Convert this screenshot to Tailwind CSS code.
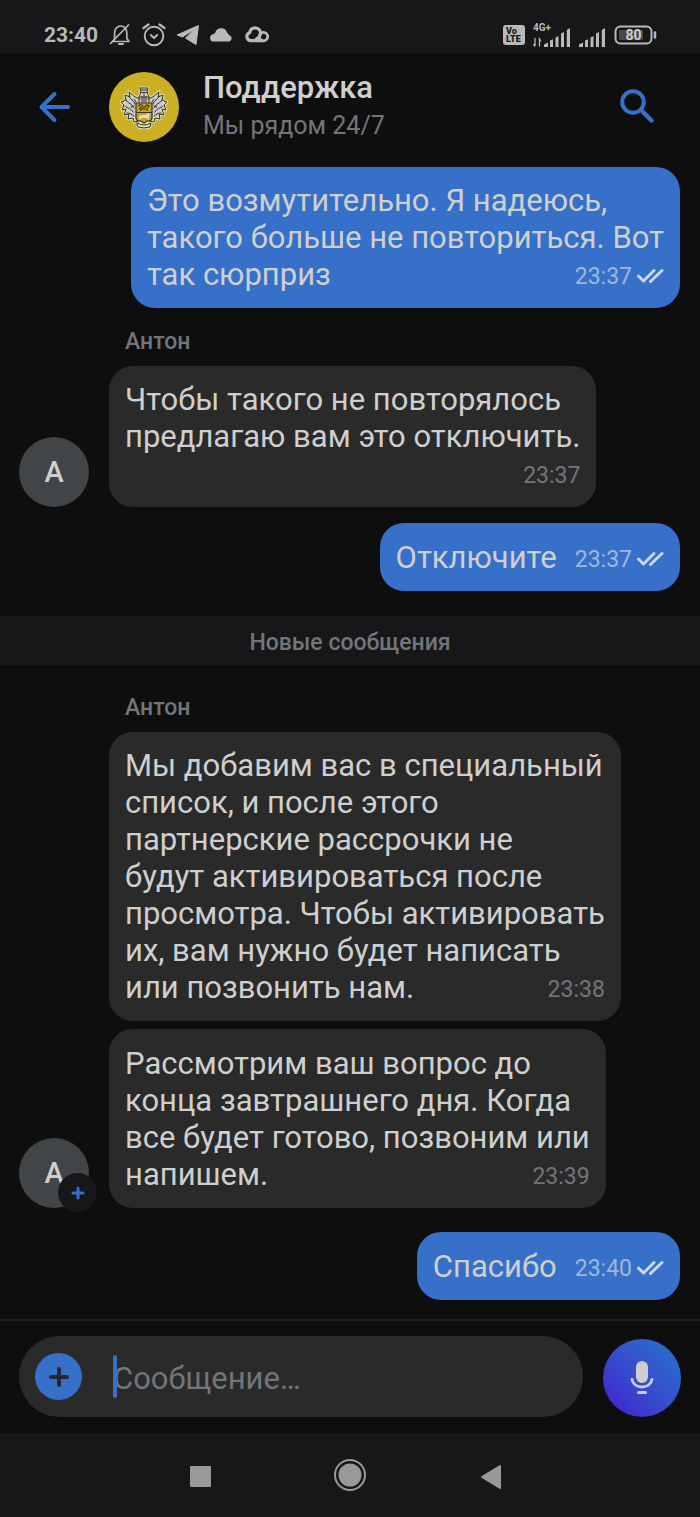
<!DOCTYPE html>
<html lang="ru">
<head>
  <meta charset="UTF-8" />
  <meta name="viewport" content="width=device-width, initial-scale=1" />
  <title>Поддержка</title>
  <script src="https://cdn.jsdelivr.net/npm/@tailwindcss/browser@4"></script>
</head>
<body class="flex min-h-screen flex-col bg-[#0e0e0e] font-[Roboto,sans-serif] text-[#cfcfcf]">

  <!-- Status bar -->
  <div class="flex h-[53px] items-center justify-between bg-[#17171a] pt-4 pr-[43px] pl-11 text-[#b9b9b9]">
    <div class="flex items-center gap-[10px]">
      <span class="text-[21px] leading-7 font-bold">23:40</span>
      <svg class="h-6 w-6" viewBox="0 0 24 24" fill="none" stroke="currentColor" stroke-width="1.7" stroke-linecap="round" stroke-linejoin="round">
        <path d="M5.500 18.500H21l-2.200-3.200V9.800C18.800 6 16.600 3 12.800 3S6.600 6 6.600 9.800v5.500z" />
        <path d="M20.500 2 2.500 20.500" />
        <path d="M11 21h4" stroke-width="2.200" />
      </svg>
      <svg class="h-6 w-6" viewBox="0 0 24 24" fill="none" stroke="currentColor" stroke-width="1.9" stroke-linecap="round" stroke-linejoin="round">
        <circle cx="12" cy="13" r="9.300" />
        <path d="m8.800 12 3.200 3 3.200-3" />
        <path d="M1.500 5 6.500 1.500M22.500 5l-5-3.500" stroke-width="2.200" />
      </svg>
      <svg class="h-6 w-6" viewBox="0 0 24 24" fill="currentColor" stroke="currentColor" stroke-linejoin="round">
        <path d="M22.500 2.500 1 12l5.500 2L18 6.500l-8.500 8.700L20 21.500z" />
      </svg>
      <svg class="h-6 w-6" viewBox="0 0 24 24" fill="currentColor">
        <path d="M4 18.500a3.600 3.600 0 0 1-.500-7.200A4 4 0 0 1 5.200 9.800 6.200 6.200 0 0 1 17 9.500a4 4 0 0 1 1.800 2.500 3.400 3.400 0 0 1 .700 6.500z" />
      </svg>
      <svg class="h-6 w-[26px]" viewBox="0 0 26 24" fill="none" stroke="currentColor" stroke-width="3.200" stroke-linejoin="round">
        <path d="M19 17.600H6.500a4 4 0 0 1-.800-7.800C6 6.500 8.500 4.800 11 4.800c3.800 0 6 3 5.400 6.500-.400 2-2.400 4-5.400 6" />
        <circle cx="19.500" cy="13.600" r="4.200" stroke-width="2.800" />
      </svg>
    </div>
    <div class="flex items-center gap-2">
      <svg class="h-5 w-[22px]" viewBox="0 0 22 20">
        <rect width="22" height="20" rx="3" fill="#b9b9b9" />
        <g fill="#17171a" font-family="Roboto, sans-serif" font-weight="900" font-size="9">
          <text x="3" y="9">Vo</text>
          <text x="3" y="17">LTE</text>
        </g>
      </svg>
      <svg class="h-[26px] w-[38px]" viewBox="0 -4 38 26" fill="currentColor">
        <text x="0" y="5" font-family="Roboto, sans-serif" font-weight="700" font-size="10">4G+</text>
        <path d="M2 12v8M.500 18 2 20.500M6.500 20.500V13l1.500 2" fill="none" stroke="currentColor" stroke-width="1.300" />
        <path d="M11 18.500l4-2V21h-4zM17 14.500l3-1.200V21h-3zM22.500 11.500l3-1.500v11h-3zM28 7.500 31 6v15h-3zM33.800 4l3.200-2V21h-3.200z" />
      </svg>
      <svg class="h-[26px] w-[27px]" viewBox="11 -4 27 26" fill="currentColor">
        <path d="M11 18.500l4-2V21h-4zM17 14.500l3-1.200V21h-3zM22.500 11.500l3-1.500v11h-3zM28 7.500 31 6v15h-3zM33.800 4l3.200-2V21h-3.200z" />
      </svg>
      <svg class="h-5 w-[43px]" viewBox="0 0 43 20">
        <rect x="1.500" y="1.500" width="36" height="17" rx="5" fill="none" stroke="#b9b9b9" stroke-width="2" />
        <rect x="5" y="5" width="24" height="10" rx="1" fill="#48484a" />
        <path d="M41 7.500v5" stroke="#b9b9b9" stroke-width="2.500" stroke-linecap="round" />
        <text x="19.500" y="15" text-anchor="middle" fill="#cfcfcf" font-family="Roboto, sans-serif" font-weight="700" font-size="14">80</text>
      </svg>
    </div>
  </div>

  <!-- Chat header -->
  <header class="flex h-[108px] items-center pr-11 pl-[37px]">
    <button type="button" aria-label="Назад" class="mr-9 text-[#3670c9]">
      <svg class="h-9 w-9" viewBox="0 0 36 36" fill="none" stroke="currentColor" stroke-width="4" stroke-linecap="round" stroke-linejoin="round">
        <path d="M31 18H5M17.500 5 4.500 18l13 13" />
      </svg>
    </button>
    <svg class="h-[70px] w-[70px]" viewBox="0 0 70 70" aria-hidden="true">
      <circle cx="35" cy="35" r="35" fill="#ccb023" />
      <!-- mantling -->
      <g stroke-linejoin="round" stroke-linecap="round">
        <g fill="#c9c9c9" stroke="#e3dba8" stroke-width="3">
          <path d="M31 27 26 25l-6-5 1 5-5-2 1 5-5 2 3 3-2 5 4-1-2 6 5-1-1 5 5-1 1 4 5-1 5 5 5-5 5 1 1-4 5 1-1-5 5 1-2-6 4 1-2-5 3-3-5-2 1-5-5 2 1-5-6 5-5 2z" />
          <path d="M31 16h8l-1 4 2 5v6H30v-6l2-5zM28 51q7 4 14 0l-1 4q-6 2-12 0z" />
        </g>
        <g fill="none" stroke="#33332f" stroke-width="1">
          <path d="M31 27 26 25l-6-5 1 5-5-2 1 5-5 2 3 3-2 5 4-1-2 6 5-1-1 5 5-1 1 4 5-1M39 27l5-2 6-5-1 5 5-2-1 5 5 2-3 3 2 5-4-1 2 6-5-1 1 5-5-1-1 4-5-1" />
          <path d="M20 24c1 4 5 4 6 8M17 28c2 4 6 3 8 8M16 34c3 3 6 2 8 6M18 41c3 0 4 1 7 3M25 27l2 3M22 35l3-1" />
          <path d="M50 24c-1 4-5 4-6 8M53 28c-2 4-6 3-8 8M54 34c-3 3-6 2-8 6M52 41c-3 0-4 1-7 3M45 27l-2 3M48 35l-3-1" />
          <path d="M31 16h8l-1 4 2 5v6M30 31v-6l2-5-1-4M32 18h6M32 20.500h6M30 25h10M33 25v5M35 22v8M37 25v5M28 51q7 4 14 0l-1 4q-6 2-12 0z" />
        </g>
      </g>
      <!-- shield -->
      <path d="M27 31h16v14q0 4-3 4h-2l-3 2-3-2h-2q-3 0-3-4z" fill="#c9a51d" stroke="#33332f" stroke-width="1.200" />
      <path d="M30 46c0-3 2-3 4-3h3l2-2 2 1-1 2v4l-2-2h-5l-2 2z" fill="#e0dcc8" />
      <path d="M27 40.500h16M30 37l2-2h4l2-2 2 1-2 3v2M31 38.500l2-1.500h4M29 34l2-1.500 3 1" fill="none" stroke="#33332f" stroke-width="1.100" />
    </svg>
    <div class="ml-6 flex-1">
      <h1 class="text-[31px] leading-[38px] font-medium">Поддержка</h1>
      <p class="text-[25px] leading-[38px] text-[#73757c]">Мы рядом 24/7</p>
    </div>
    <button type="button" aria-label="Поиск" class="text-[#3670c9]">
      <svg class="h-9 w-9" viewBox="1 1 36 36" fill="none" stroke="currentColor" stroke-width="4" stroke-linecap="round">
        <circle cx="14" cy="14" r="10.800" />
        <path d="m24 24 8.500 8.500" stroke-width="4.500" />
      </svg>
    </button>
  </header>

  <!-- Messages -->
  <main class="flex flex-1 flex-col pt-[6px] text-[31px] leading-[37px]">
    <div class="mr-5 self-end rounded-3xl bg-[#3670c9] px-4 py-[15px]">Это возмутительно. Я надеюсь,<br>такого больше не повториться. Вот<br>так сюрприз<span class="float-right mt-[5px] ml-[18px] flex items-center gap-1 text-[23px] leading-8 text-[#a1b6db]"><time>23:37</time>
        <svg class="h-5 w-7" viewBox="0 0 28 20" fill="none" stroke="#cdd6e6" stroke-width="3" stroke-linecap="round" stroke-linejoin="round"><path d="m2.500 9 5 5L18 3.500M14.500 14.500 26 3.500" /></svg></span></div>

    <section class="mt-5 flex items-end gap-5 pl-[19px]">
      <div class="flex h-[70px] w-[70px] items-center justify-center rounded-full bg-[#424548] text-[29px] font-medium">А</div>
      <div class="flex flex-col items-start">
        <h2 class="mb-[10px] ml-4 text-[23px] leading-7 font-medium text-[#73757c]">Антон</h2>
        <div class="rounded-3xl bg-[#2a2a2a] px-4 py-[15px]">Чтобы такого не повторялось<br>предлагаю вам это отключить.<br><time class="float-right mt-[5px] text-[23px] leading-8 text-[#73757c]">23:37</time></div>
      </div>
    </section>

    <div class="mt-4 mr-5 self-end rounded-3xl bg-[#3670c9] px-4 pt-4 pb-[15px]">Отключите<span class="float-right mt-[5px] ml-[18px] flex items-center gap-1 text-[23px] leading-8 text-[#a1b6db]"><time>23:37</time>
        <svg class="h-5 w-7" viewBox="0 0 28 20" fill="none" stroke="#cdd6e6" stroke-width="3" stroke-linecap="round" stroke-linejoin="round"><path d="m2.500 9 5 5L18 3.500M14.500 14.500 26 3.500" /></svg></span></div>

    <div class="mt-[25px] bg-[#17171a] pt-1 text-center text-[23px] leading-[45px] font-medium text-[#73757c]">Новые сообщения</div>

    <section class="mt-[29px] flex items-end gap-5 pl-[19px]">
      <div class="relative flex h-[70px] w-[70px] items-center justify-center rounded-full bg-[#424548] text-[29px] font-medium">
        А
        <span class="absolute -right-2 -bottom-1 flex h-[39px] w-[39px] items-center justify-center rounded-full bg-[#17171a]">
          <svg class="h-[14px] w-[14px]" viewBox="0 0 14 14" stroke="#3670c9" stroke-width="3" stroke-linecap="round"><path d="M7 2v10M2 7h10" /></svg>
        </span>
      </div>
      <div class="flex flex-col items-start">
        <h2 class="mb-[10px] ml-4 text-[23px] leading-7 font-medium text-[#73757c]">Антон</h2>
        <div class="mb-2 rounded-3xl bg-[#2a2a2a] px-4 py-[15px]">Мы добавим вас в специальный<br>список, и после этого<br>партнерские рассрочки не<br>будут активироваться после<br>просмотра. Чтобы активировать<br>их, вам нужно будет написать<br>или позвонить нам.<time class="float-right mt-[5px] text-[23px] leading-8 text-[#73757c]">23:38</time></div>
        <div class="rounded-3xl bg-[#2a2a2a] px-4 pt-4 pb-[15px]">Рассмотрим ваш вопрос до<br>конца завтрашнего дня. Когда<br>все будет готово, позвоним или<br>напишем.<time class="float-right mt-[5px] text-[23px] leading-8 text-[#73757c]">23:39</time></div>
      </div>
    </section>

    <div class="mt-6 mr-5 mb-[19px] self-end rounded-3xl bg-[#3670c9] px-4 pt-4 pb-[15px]">Спасибо<span class="float-right mt-[5px] ml-[18px] flex items-center gap-1 text-[23px] leading-8 text-[#a1b6db]"><time>23:40</time>
        <svg class="h-5 w-7" viewBox="0 0 28 20" fill="none" stroke="#cdd6e6" stroke-width="3" stroke-linecap="round" stroke-linejoin="round"><path d="m2.500 9 5 5L18 3.500M14.500 14.500 26 3.500" /></svg></span></div>
  </main>

  <!-- Message form -->
  <form class="flex items-end gap-5 border-t-2 border-[#202020] pt-[15px] pr-[19px] pb-4 pl-[19px]">
    <div class="relative flex h-[81px] flex-1 items-center rounded-full bg-[#2a2a2a] pr-8 pl-4">
      <button type="button" aria-label="Прикрепить файл" class="flex h-[47px] w-[47px] items-center justify-center rounded-full bg-[#3670c9]">
        <svg class="h-5 w-5" viewBox="0 0 20 20" stroke="#25282e" stroke-width="4" stroke-linecap="round"><path d="M10 2v16M2 10h16" /></svg>
      </button>
      <span class="absolute top-[19px] left-[94px] h-[43px] w-1 rounded-full bg-[#3670c9]"></span>
      <input type="text" aria-label="Сообщение" placeholder="Сообщение…" class="ml-[31px] min-w-0 flex-1 pt-1 text-[31px] leading-[37px] outline-none placeholder:text-[#73757c]" />
    </div>
    <button type="button" aria-label="Голосовое сообщение" class="flex h-[78px] w-[78px] items-center justify-center rounded-full bg-linear-to-tr from-[#4010cf] to-[#2572cc]">
      <svg class="h-9 w-7" viewBox="0 0 28 36" fill="none" stroke="#c9ccec" stroke-width="3" stroke-linecap="round">
        <rect x="8" y="1" width="12" height="22" rx="6" fill="#cfcfcf" stroke="none" />
        <path d="M4 19.500C6 29.500 22 29.500 24 19.500M10.500 32.500h7" />
      </svg>
    </button>
  </form>

  <!-- System navigation -->
  <nav class="flex h-[84px] items-center justify-center gap-28 bg-[#17171a] text-[#999]">
    <button type="button" aria-label="Недавние приложения">
      <svg class="h-6 w-9" viewBox="0 0 36 24" fill="currentColor"><rect x="4" y="3" width="21" height="21" rx="1" /></svg>
    </button>
    <button type="button" aria-label="Домой">
      <svg class="h-8 w-8" viewBox="0 0 32 32" fill="currentColor"><circle cx="16" cy="16" r="11.500" /><circle cx="16" cy="16" r="15" fill="none" stroke="currentColor" stroke-width="2" /></svg>
    </button>
    <button type="button" aria-label="Назад">
      <svg class="h-7 w-9" viewBox="0 0 36 28" fill="currentColor" stroke="currentColor" stroke-width="2" stroke-linejoin="round"><path d="M22 5v22L4 16z" /></svg>
    </button>
  </nav>

</body>
</html>
